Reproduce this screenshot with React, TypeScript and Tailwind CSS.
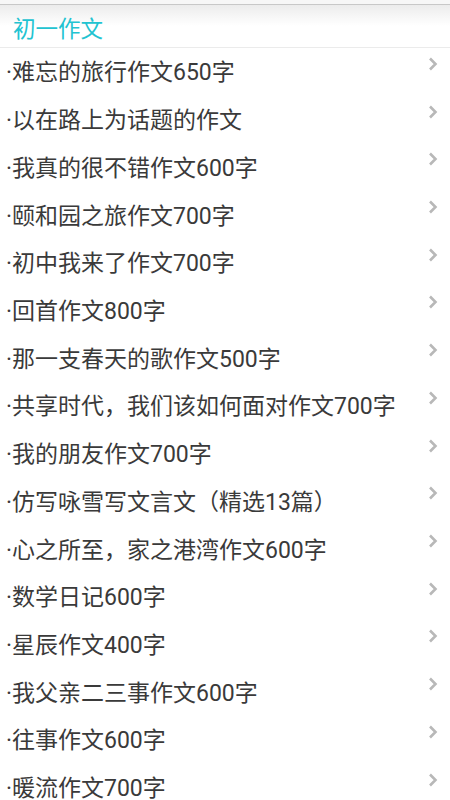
const ITEMS = [
  '难忘的旅行作文650字',
  '以在路上为话题的作文',
  '我真的很不错作文600字',
  '颐和园之旅作文700字',
  '初中我来了作文700字',
  '回首作文800字',
  '那一支春天的歌作文500字',
  '共享时代，我们该如何面对作文700字',
  '我的朋友作文700字',
  '仿写咏雪写文言文（精选13篇）',
  '心之所至，家之港湾作文600字',
  '数学日记600字',
  '星辰作文400字',
  '我父亲二三事作文600字',
  '往事作文600字',
  '暖流作文700字',
];

function Chevron() {
  return (
    <svg width="10" height="14" viewBox="0 0 10 14" className="shrink-0">
      <path d="M2 1.5 L7.5 7 L2 12.5" fill="none" stroke="#b8b8b8" strokeWidth="2.6" />
    </svg>
  );
}

export default function App() {
  return (
    <div
      className="w-[450px] h-[800px] overflow-hidden bg-white"
      style={{ fontFamily: 'Roboto, "Noto Sans CJK SC", sans-serif' }}
    >
      <div className="h-[4px] bg-[#f7f7f7]" />
      <div className="h-[1px] bg-[#c8c8c8]" />
      <div className="h-[43px] bg-gradient-to-b from-[#ececec] via-white to-white flex items-center pl-[13px] border-b border-[#ebebeb]">
        <span className="text-[22.5px] text-[#22c3d1] leading-none mt-[6px]">初一作文</span>
      </div>
      <ul>
        {ITEMS.map((t) => (
          <li key={t} className="h-[47.73px] flex items-center justify-between pl-[6px] pr-[12px]">
            <span className="text-[23px] text-[#3a3a3a] leading-none mt-[2px]">·{t}</span>
            <span className="-mt-[16px]">
              <Chevron />
            </span>
          </li>
        ))}
      </ul>
    </div>
  );
}
